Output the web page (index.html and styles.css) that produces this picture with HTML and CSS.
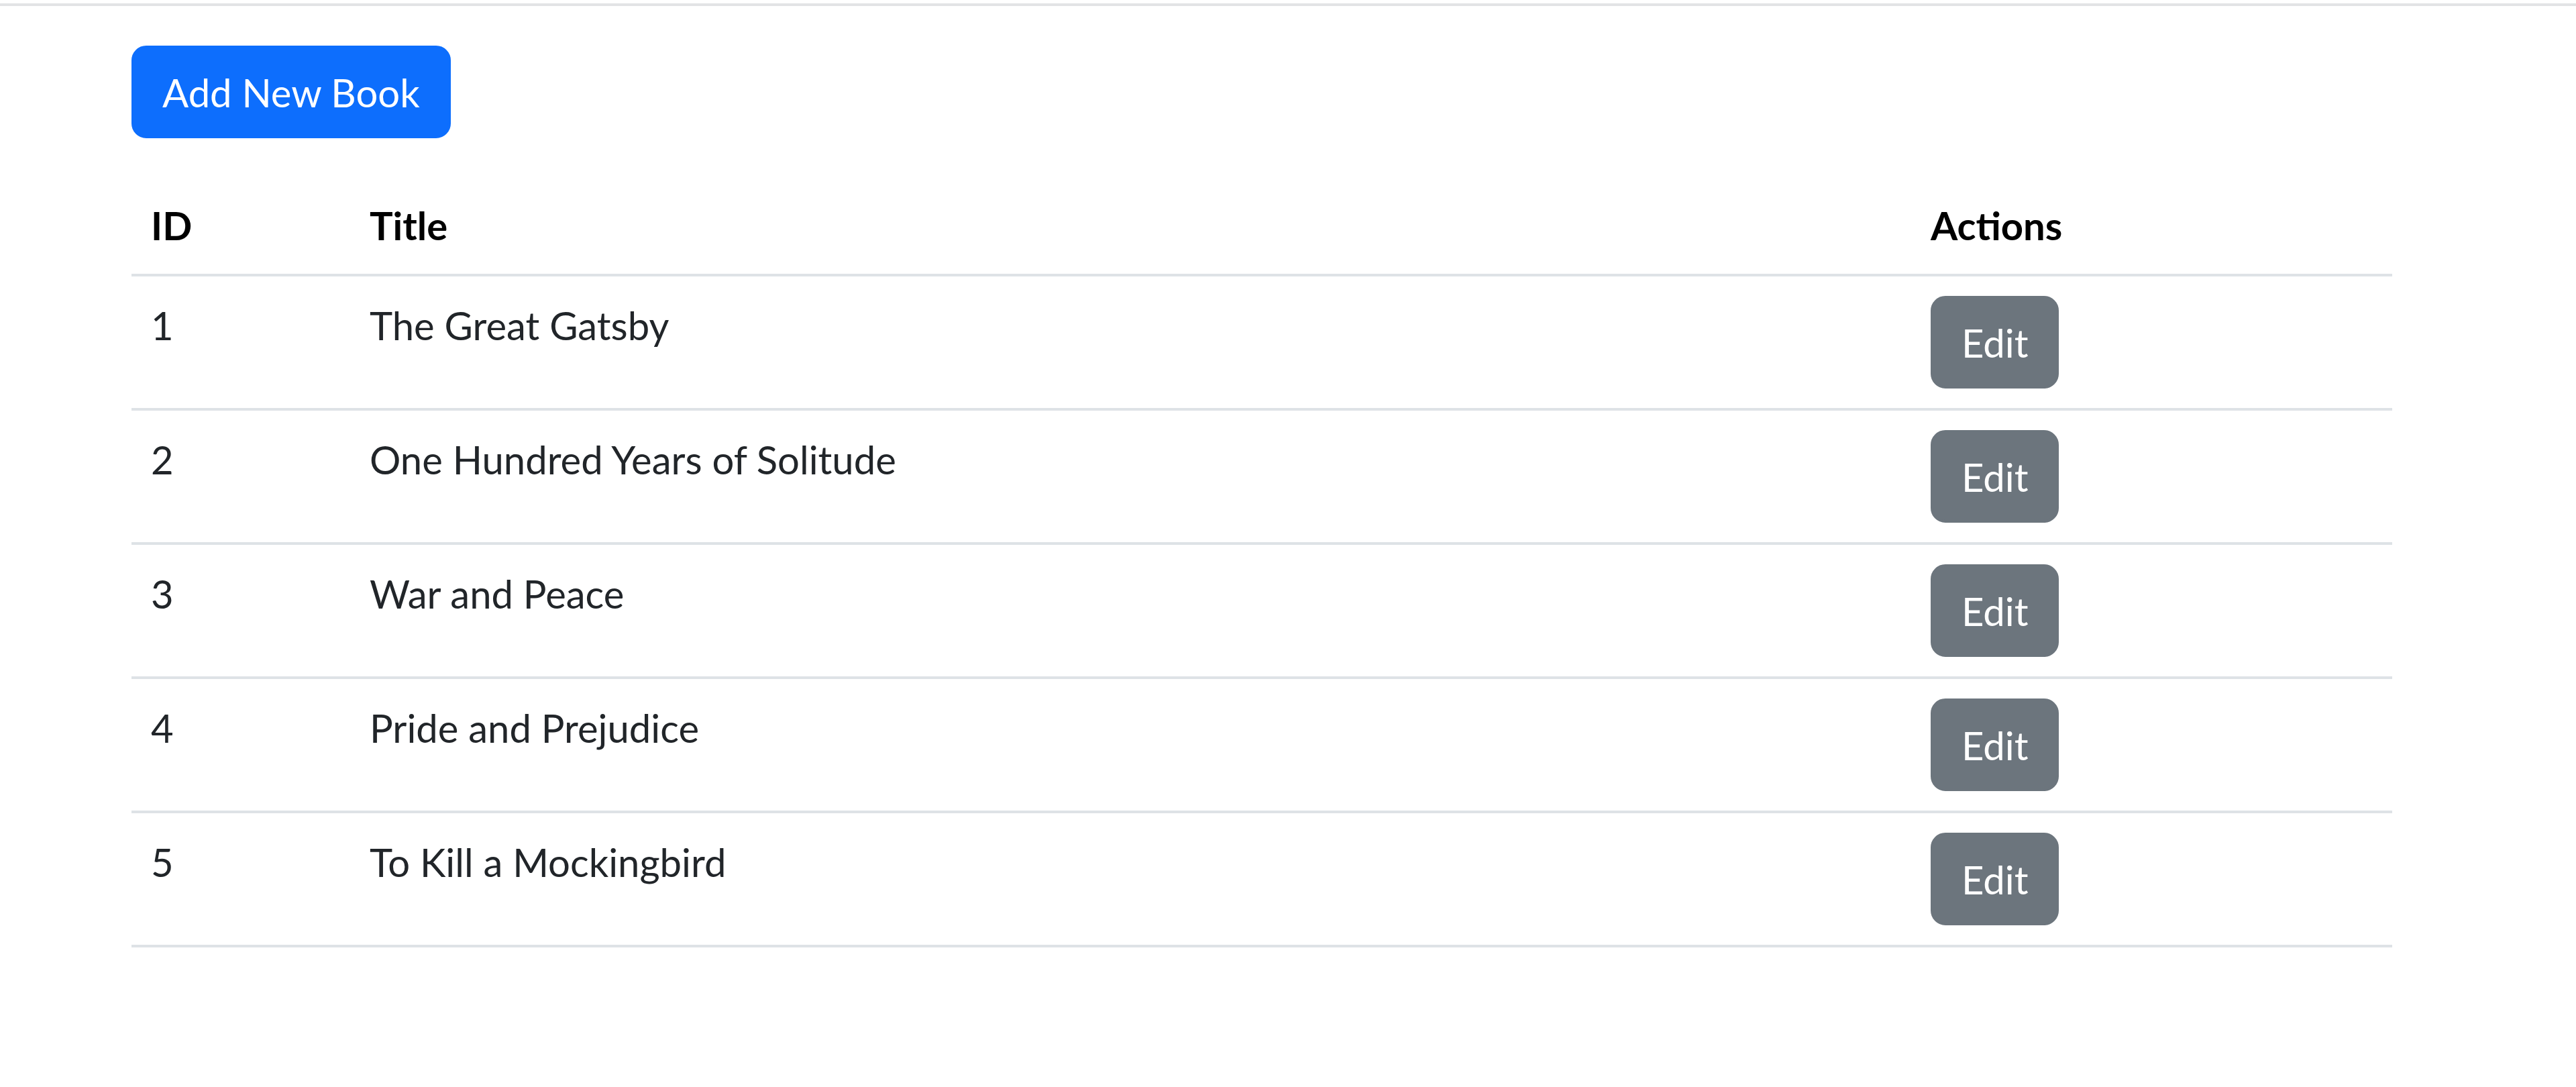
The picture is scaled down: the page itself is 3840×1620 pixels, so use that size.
FILE: index.html
```html
<!DOCTYPE html>
<html lang="en">
<head>
<meta charset="utf-8">
<title>Books</title>
<link rel="stylesheet" href="styles.css">
</head>
<body>
<div class="topbar"></div>
<main class="page">
  <button class="btn btn-primary" type="button">Add New Book</button>
  <table class="books">
    <colgroup>
      <col class="col-id">
      <col class="col-title">
      <col class="col-actions">
    </colgroup>
    <thead>
      <tr><th>ID</th><th>Title</th><th>Actions</th></tr>
    </thead>
    <tbody>
      <tr><td>1</td><td>The Great Gatsby</td><td><button class="btn btn-secondary" type="button">Edit</button></td></tr>
      <tr><td>2</td><td>One Hundred Years of Solitude</td><td><button class="btn btn-secondary" type="button">Edit</button></td></tr>
      <tr><td>3</td><td>War and Peace</td><td><button class="btn btn-secondary" type="button">Edit</button></td></tr>
      <tr><td>4</td><td>Pride and Prejudice</td><td><button class="btn btn-secondary" type="button">Edit</button></td></tr>
      <tr><td>5</td><td>To Kill a Mockingbird</td><td><button class="btn btn-secondary" type="button">Edit</button></td></tr>
    </tbody>
  </table>
</main>
</body>
</html>
```

FILE: styles.css
```css
html, body {
  margin: 0;
  padding: 0;
  background: #ffffff;
}

body {
  font-family: "Segoe UI", Lato, "Liberation Sans", sans-serif;
  font-size: 58px;
  line-height: 87px;
  color: #212529;
}

.topbar {
  height: 4px;
  margin-top: 5px;
  background: #e2e3e5;
}

.page {
  width: 3370px;
  padding: 59px 0 0 196px;
}

.btn {
  display: inline-block;
  box-sizing: border-box;
  height: 138px;
  font-family: inherit;
  font-size: 58px;
  line-height: 87px;
  padding: 21.5px 42px;
  border: 4px solid transparent;
  border-radius: 22px;
  color: #ffffff;
  cursor: pointer;
  margin: 0;
}

.btn-primary {
  background: #0d6efd;
  border-color: #0d6efd;
}

.btn-secondary {
  background: #6c757d;
  border-color: #6c757d;
}

.books {
  margin-top: 57px;
  width: 3370px;
  border-collapse: collapse;
  table-layout: fixed;
}

.col-id { width: 326px; }
.col-title { width: 2327px; }
.col-actions { width: 717px; }

.books th,
.books td {
  padding: 29px;
  text-align: left;
  vertical-align: top;
  border-bottom: 4px solid #dee2e6;
}

.books th {
  font-weight: 700;
  color: #000000;
}
```
